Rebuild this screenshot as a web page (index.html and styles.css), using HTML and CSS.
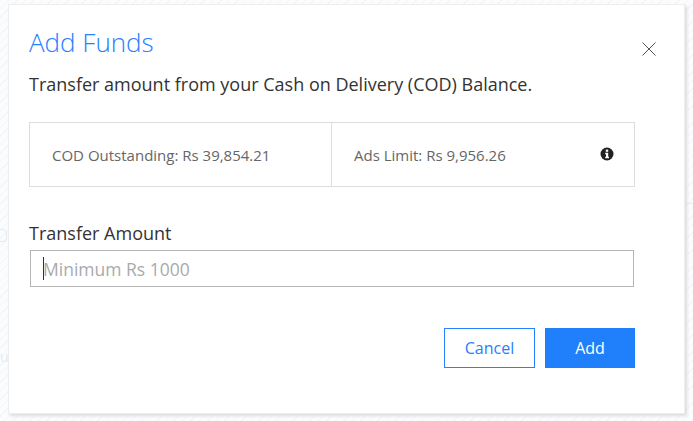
FILE: index.html
```html
<!DOCTYPE html>
<html lang="en">
<head>
<meta charset="utf-8">
<title>Add Funds</title>
<link rel="stylesheet" href="styles.css">
</head>
<body>
<div class="ghost ghost-box"></div>
<div class="ghost ghost-text">ur</div>
<div class="ghost ghost-line"></div>
<div class="modal">
  <header class="modal-head">
    <h1 class="title">Add Funds</h1>
    <button class="close" aria-label="Close">
      <svg width="14" height="14" viewBox="0 0 14 14"><path d="M0.5 0.5L13.5 13.5M13.5 0.5L0.5 13.5" stroke="#555" stroke-width="1" fill="none"/></svg>
    </button>
  </header>
  <p class="lead">Transfer amount from your Cash on Delivery (COD) Balance.</p>
  <div class="stats">
    <div class="stat stat-left">COD Outstanding: Rs 39,854.21</div>
    <div class="stat stat-right">
      <span>Ads Limit: Rs 9,956.26</span>
      <svg class="info" width="14" height="14" viewBox="0 0 14 14"><circle cx="7" cy="7" r="6.5" fill="#222"/><rect x="5.8" y="2.6" width="2.4" height="2.2" fill="#fff"/><path d="M5.2 5.8H8.2V9.8H9V11.2H5.2V9.8H6V7.2H5.2Z" fill="#fff"/></svg>
    </div>
  </div>
  <label class="label" for="amount">Transfer Amount</label>
  <div class="field">
    <span class="caret"></span>
    <input class="input" id="amount" type="text" placeholder="Minimum Rs 1000">
  </div>
  <div class="actions">
    <button class="btn btn-outline">Cancel</button>
    <button class="btn btn-solid">Add</button>
  </div>
</div>
</body>
</html>
```
FILE: styles.css
```css
* { box-sizing: border-box; }
html, body { height: 100%; }
body {
  position: relative;
  margin: 0;
  padding: 5px 9px 8px 9px;
  overflow: hidden;
  font-family: "Open Sans", sans-serif;
  background-color: #fbfcfd;
  background-image: repeating-linear-gradient(135deg, #f4f5f6 0 1px, transparent 1px 6px);
}
.ghost { position: absolute; }
.ghost-box {
  left: -8px;
  top: 229px;
  width: 15px;
  height: 13px;
  border: 1px solid #e4e9f3;
  border-radius: 4px;
}
.ghost-text {
  left: 0;
  top: 349px;
  font-size: 14px;
  line-height: 16px;
  color: #e8ebef;
}
.ghost-line {
  left: 685px;
  top: 203px;
  width: 8px;
  height: 1px;
  background: #e8ebef;
}
.modal {
  position: relative;
  width: 675px;
  height: 408px;
  background: #fff;
  box-shadow: 0 0 0 1px #eeeeee, 2px 2px 3px 1px #dcdcdc;
  padding: 19px 49px 0 20px;
}
.modal-head { display: flex; justify-content: space-between; align-items: flex-start; }
.title {
  margin: 0;
  font-size: 26px;
  line-height: 36px;
  font-weight: 300;
  color: #2680ff;
}
.close {
  margin: 18px -21px 0 0;
  padding: 0;
  border: 0;
  background: none;
  display: block;
  height: 14px;
}
.close svg { display: block; }
.lead {
  margin: 12px 0 0;
  font-size: 18px;
  line-height: 24px;
  color: #333;
}
.stats {
  display: flex;
  margin-top: 26px;
  height: 65px;
  width: 606px;
  border: 1px solid #ddd;
}
.stat { display: flex; align-items: center; font-size: 15px; color: #666; }
.stat-left { width: 302px; padding-left: 22px; border-right: 1px solid #ddd; }
.stat-right { flex: 1; justify-content: space-between; padding: 0 20px 0 22px; }
.info { margin-top: -2px; }
.label {
  display: block;
  margin-top: 34px;
  font-size: 18px;
  line-height: 24px;
  color: #333;
}
.field {
  position: relative;
  margin: 5px 0 0 1px;
  width: 604px;
  height: 37px;
  border: 1px solid #b5b5b5;
}
.caret {
  position: absolute;
  left: 12px;
  top: 6px;
  width: 1px;
  height: 23px;
  background: #333;
}
.input {
  display: block;
  width: 100%;
  height: 100%;
  border: 0;
  outline: 0;
  padding: 0 12px;
  font: 17.5px "Open Sans", sans-serif;
  background: transparent;
}
.input::placeholder { color: #aaa; opacity: 1; }
.actions {
  display: flex;
  justify-content: flex-end;
  gap: 10px;
  width: 606px;
  margin-top: 41px;
}
.btn {
  height: 40px;
  font: 16px "Open Sans", sans-serif;
  padding: 0;
}
.btn-outline { width: 91px; background: #fff; color: #2680ff; border: 1px solid #2680ff; }
.btn-solid { width: 90px; background: #2080fb; color: #fff; border: 0; }
```
